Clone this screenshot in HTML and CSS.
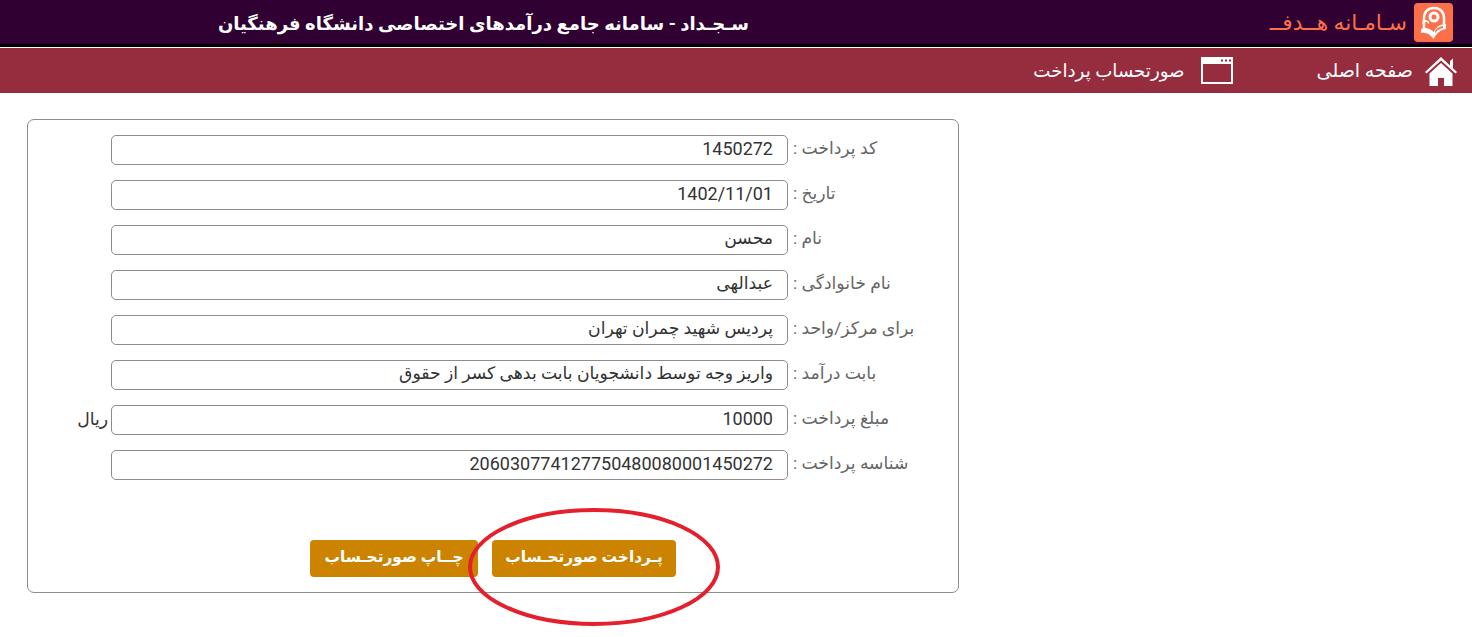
FILE: index.html
```html
<!DOCTYPE html>
<html lang="fa" dir="rtl">
<head>
<meta charset="UTF-8">
<title>سجداد</title>
<link rel="stylesheet" href="styles.css">
</head>
<body>
	<div class="topbar">
		<div class="brand">
			<svg class="logo" viewBox="0 0 39 39">
				<rect width="39" height="39" rx="4" fill="#fb7048"/>
				<path d="M10 25V15C10 9 14 5 20 5s10 4 10 10v6" fill="none" stroke="#fff" stroke-width="2.500"/>
				<circle cx="20" cy="14" r="5.500" fill="#fff"/>
				<circle cx="20" cy="14" r="2.500" fill="#fb7048"/>
				<path d="M7 26c4-2 9-1 12.500 3 3.500-6 7-8 12.500-8v5c-6 1-9 4-12.500 10C16 31 12 29 7 30z" fill="#fff"/>
				<path d="M21 28c2-3 5-4.500 8-5v2c-3 .5-5.500 2-8 5z" fill="#fb7048"/>
				<path d="M9 21c0-2 1.500-3 3-3s2.500 1 2.500 2.500" fill="none" stroke="#fff" stroke-width="1.500"/>
			</svg>
			<span class="brand-name">سـامـانه هــدفــ</span>
		</div>
		<div class="title">سـجـداد - سامانه جامع درآمدهای اختصاصی دانشگاه فرهنگیان</div>
	</div>
	<div class="navbar">
		<a class="nav-item nav-home">
			<svg class="nav-icon-home" viewBox="0 0 32 32">
				<path d="M16 2L0 17l1.500 1.500L16 5.500l14.500 13L32 17l-4-3.800V3.500l-3 2.500v4.500z" fill="#fff"/>
				<path d="M16 8L4.500 18.500V31H13v-8h6v8h8.500V18.500z" fill="#fff"/>
			</svg>
			<span>صفحه اصلی</span>
		</a>
		<a class="nav-item nav-bill">
			<svg class="nav-icon-window" viewBox="0 0 32 27">
				<path d="M0 0h32v27H0z" fill="#fff"/>
				<path d="M2 7h28v18H2z" fill="#962d3e"/>
				<path d="M20 2.500h2v2h-2zM24 2.500h2v2h-2zM28 2.500h2v2h-2z" fill="#962d3e"/>
			</svg>
			<span>صورتحساب پرداخت</span>
		</a>
	</div>
	<div class="content">
		<form class="card">
			<div class="row"><label>کد پرداخت :</label><div class="field num">1450272</div></div>
			<div class="row"><label>تاریخ :</label><div class="field num">1402/11/01</div></div>
			<div class="row"><label>نام :</label><div class="field">محسن</div></div>
			<div class="row"><label>نام خانوادگی :</label><div class="field">عبدالهی</div></div>
			<div class="row"><label>برای مرکز/واحد :</label><div class="field">پردیس شهید چمران تهران</div></div>
			<div class="row"><label>بابت درآمد :</label><div class="field">واریز وجه توسط دانشجویان بابت بدهی کسر از حقوق</div></div>
			<div class="row"><label>مبلغ پرداخت :</label><div class="field num">10000</div><span class="unit">ریال</span></div>
			<div class="row"><label>شناسه پرداخت :</label><div class="field num">206030774127750480080001450272</div></div>
			<div class="buttons">
				<button type="button" class="btn btn-pay">پـرداخت صورتحـساب</button>
				<button type="button" class="btn btn-print">چــاپ صورتحـساب</button>
			</div>
		</form>
		<svg class="circle-mark" viewBox="0 0 256 122">
			<ellipse cx="127" cy="60" rx="124" ry="57" fill="none" stroke="#e3202c" stroke-width="4"/>
		</svg>
	</div>
</body>
</html>
```
FILE: styles.css
```css
body {
	margin: 0;
	padding: 0;
	background-color: #FFFFFF;
	font-family: Roboto, "DejaVu Sans", sans-serif;
	font-size: 17.200px;
	color: #333333;
}

.topbar {
	display: flex;
	align-items: center;
	height: 44px;
	background-color: #300033;
	border-bottom: 3px solid #000000;
	padding-right: 19px;
}

.brand {
	display: flex;
	align-items: center;
	gap: 7px;
	width: 185px;
}

.logo {
	width: 39px;
	height: 39px;
	flex: none;
}

.brand-name {
	color: #fb7048;
	font-size: 21.700px;
	white-space: nowrap;
}

.title {
	margin-right: 519px;
	padding-top: 3px;
	color: #FFFFFF;
	font-size: 18px;
	font-weight: bold;
	white-space: nowrap;
}

.navbar {
	display: flex;
	align-items: center;
	gap: 84px;
	height: 45px;
	margin-top: 1px;
	background-color: #962d3e;
	padding-right: 15px;
}

.nav-item {
	display: flex;
	align-items: center;
	gap: 12px;
	color: #FFFFFF;
	font-size: 19px;
	white-space: nowrap;
}

.nav-bill {
	gap: 16px;
	font-size: 18.200px;
}

.nav-icon-home {
	width: 32px;
	height: 32px;
	flex: none;
}

.nav-icon-window {
	width: 32px;
	height: 27px;
	flex: none;
}

.content {
	position: relative;
	direction: ltr;
	padding: 26px 0 44px 27px;
}

.card {
	direction: rtl;
	box-sizing: border-box;
	width: 932px;
	height: 474px;
	border: 1px solid #8c8c8c;
	border-radius: 7px;
	padding-top: 15px;
}

.row {
	display: flex;
	align-items: center;
	height: 30px;
	margin-bottom: 15px;
}

.row label {
	box-sizing: border-box;
	width: 170px;
	padding-left: 5px;
	padding-bottom: 5px;
	text-align: left;
	color: #666666;
	white-space: nowrap;
}

.field {
	box-sizing: border-box;
	width: 677px;
	height: 30px;
	line-height: 25px;
	border: 1px solid #8c8c8c;
	border-radius: 5px;
	padding: 0 14px;
	color: #333333;
	white-space: nowrap;
}

.num {
	font-size: 18px;
}

.unit {
	margin-right: 3px;
	padding-bottom: 3px;
	color: #333333;
}

.buttons {
	display: flex;
	gap: 14px;
	margin-top: 60px;
	padding-right: 282px;
}

.btn {
	height: 37px;
	border: none;
	border-radius: 4px;
	background-color: #cc8400;
	color: #FFFFFF;
	font-family: Roboto, "DejaVu Sans", sans-serif;
	font-size: 15.400px;
	font-weight: bold;
	padding: 0 0 3px;
	white-space: nowrap;
}

.btn-pay {
	width: 184px;
}

.btn-print {
	width: 168px;
}

.circle-mark {
	position: absolute;
	left: 467px;
	top: 414px;
	width: 256px;
	height: 122px;
}
```
